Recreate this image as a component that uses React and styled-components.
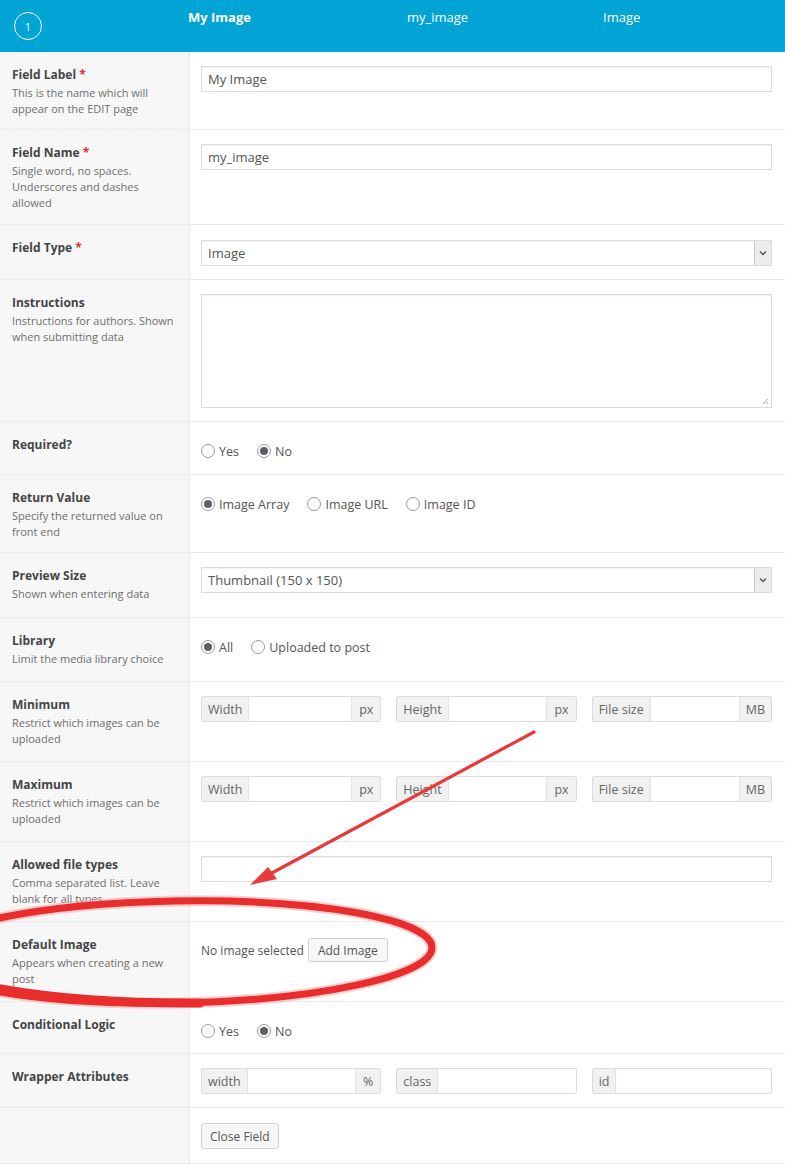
import React from "react";
import styled, { createGlobalStyle } from "styled-components";

const GlobalStyle = createGlobalStyle`
  body {
    margin: 0;
    background: #fff;
    font-family: "Open Sans", "Noto Sans", sans-serif;
  }
`;

const Page = styled.div`
  position: relative;
  width: 785px;
  overflow: hidden;
`;

const Header = styled.div`
  display: grid;
  grid-template-columns: 174px 219px 196px 1fr;
  height: 52px;
  padding-left: 14px;
  box-sizing: border-box;
  background: #02a3d5;
  color: #fff;
  font-size: 13px;
`;

const Circle = styled.div`
  width: 28px;
  height: 28px;
  margin-top: 12px;
  border: 1px solid #fff;
  border-radius: 50%;
  box-sizing: border-box;
  display: flex;
  align-items: center;
  justify-content: center;
  font-size: 11px;
`;

const HeadText = styled.div`
  padding-top: 8px;
  line-height: 18px;
  font-weight: ${(p) => (p.$bold ? 700 : 400)};
`;

const Row = styled.div`
  display: grid;
  grid-template-columns: 190px 1fr;
  height: ${(p) => p.$h}px;
  box-sizing: border-box;
  border-bottom: 1px solid #eaeaea;
`;

const LabelCell = styled.div`
  background-color: #f8f8f8;
  background-image: radial-gradient(#efefef 0.6px, transparent 0.8px);
  background-size: 3px 3px;
  border-right: 1px solid #e8e8e8;
  padding: 14px 10px 0 12px;
`;

const Title = styled.div`
  font-size: 12px;
  font-weight: 700;
  line-height: 18px;
  color: #454545;
`;

const Req = styled.span`
  color: #e0302f;
`;

const Desc = styled.div`
  font-size: 11px;
  line-height: 16px;
  color: #6e6e6e;
  margin-top: 1px;
`;

const FieldCell = styled.div`
  padding: 14px 13px 0 11px;
`;

const TextInput = styled.div`
  height: 26px;
  border: 1px solid #dcdcdc;
  box-shadow: inset 0 1px 2px rgba(0, 0, 0, 0.06);
  box-sizing: border-box;
  padding: 0 6px;
  display: flex;
  align-items: center;
  font-size: 13px;
  color: #555;
  background: #fff;
`;

const SelectBox = styled(TextInput)`
  justify-content: space-between;
  padding-right: 0;
  margin-top: ${(p) => p.$mt || 0}px;
`;

const ArrowBox = styled.div`
  width: 16px;
  height: 24px;
  background: #ececec;
  border-left: 1px solid #c8c8c8;
  display: flex;
  align-items: center;
  justify-content: center;
`;

const TextArea = styled.div`
  position: relative;
  height: 114px;
  border: 1px solid #dcdcdc;
  box-shadow: inset 0 1px 2px rgba(0, 0, 0, 0.06);
  box-sizing: border-box;
`;

const Grip = styled.svg`
  position: absolute;
  right: 2px;
  bottom: 2px;
`;

const Radios = styled.div`
  display: flex;
  align-items: center;
  height: 28px;
  margin-top: 1px;
`;

const RadioItem = styled.label`
  display: flex;
  align-items: center;
  gap: 4px;
  margin-right: 18px;
  font-size: 12.5px;
  color: #555;
`;

const RadioDot = styled.span`
  width: 14px;
  height: 14px;
  border: 1px solid #9a9a9a;
  border-radius: 50%;
  box-sizing: border-box;
  background: #fff;
  display: flex;
  align-items: center;
  justify-content: center;
  &::after {
    content: "";
    width: 8px;
    height: 8px;
    border-radius: 50%;
    background: ${(p) => (p.$on ? "#5e5e64" : "transparent")};
  }
`;

const Groups = styled.div`
  display: grid;
  grid-template-columns: 1fr 1fr 1fr;
  gap: 15px;
`;

const Group = styled.div`
  display: flex;
  height: 26px;
  border: 1px solid #dcdcdc;
  border-radius: 2px;
  box-sizing: border-box;
  overflow: hidden;
`;

const Addon = styled.div`
  display: flex;
  align-items: center;
  padding: 0 ${(p) => p.$pad || 6}px;
  background: #f1f1f1;
  font-size: 12.5px;
  color: #666;
  white-space: nowrap;
`;

const GroupField = styled.div`
  flex: 1;
  background: #fff;
  border-left: 1px solid #e2e2e2;
  border-right: ${(p) => (p.$last ? "none" : "1px solid #e2e2e2")};
`;

const ImageLine = styled.div`
  display: flex;
  align-items: center;
  gap: 4px;
  height: 28px;
  font-size: 12px;
  color: #555;
`;

const Button = styled.div`
  display: inline-flex;
  align-items: center;
  height: ${(p) => p.$h || 24}px;
  padding: 0 ${(p) => p.$pad || 9}px;
  border: 1px solid #cfcfcf;
  border-radius: 3px;
  background: #f7f7f7;
  box-sizing: border-box;
  font-size: 12px;
  color: #555;
  margin-top: ${(p) => p.$mt || 0}px;
`;

const Overlay = styled.svg`
  position: absolute;
  top: 0;
  left: 0;
  pointer-events: none;
`;

const Radio = ({ on, children }) => (
  <RadioItem>
    <RadioDot $on={on} />
    {children}
  </RadioItem>
);

const Chevron = () => (
  <svg width="8" height="6" viewBox="0 0 8 6">
    <path d="M1 1.5 L4 4.5 L7 1.5" fill="none" stroke="#555" strokeWidth="1.4" />
  </svg>
);

const SizeGroups = () => (
  <Groups>
    <Group>
      <Addon>Width</Addon>
      <GroupField />
      <Addon $pad={7}>px</Addon>
    </Group>
    <Group>
      <Addon>Height</Addon>
      <GroupField />
      <Addon $pad={7}>px</Addon>
    </Group>
    <Group>
      <Addon>File size</Addon>
      <GroupField />
      <Addon>MB</Addon>
    </Group>
  </Groups>
);

const Annotations = () => (
  <Overlay width="785" height="1164" viewBox="0 0 785 1164">
    <ellipse cx="176" cy="952" rx="256" ry="51" fill="none" stroke="#f39a9a" strokeWidth="11" opacity="0.45" transform="rotate(-1 176 952)" />
    <ellipse cx="176" cy="952" rx="256" ry="51" fill="none" stroke="#e92d2d" strokeWidth="7" transform="rotate(-1 176 952)" />
    <path d="M -60 975 Q 40 1004 200 1003" fill="none" stroke="#e92d2d" strokeWidth="9" strokeLinecap="round" />
    <line x1="534" y1="732" x2="270" y2="874" stroke="#e9393a" strokeWidth="3.2" strokeLinecap="round" />
    <polygon points="250,885 268,867 277,879" fill="#e9393a" />
  </Overlay>
);

const App = () => {
  return (
    <Page>
      <GlobalStyle />
      <Header>
        <Circle>1</Circle>
        <HeadText $bold>My Image</HeadText>
        <HeadText>my_image</HeadText>
        <HeadText>Image</HeadText>
      </Header>

      <Row $h={78}>
        <LabelCell>
          <Title>
            Field Label <Req>*</Req>
          </Title>
          <Desc>This is the name which will appear on the EDIT page</Desc>
        </LabelCell>
        <FieldCell>
          <TextInput>My Image</TextInput>
        </FieldCell>
      </Row>

      <Row $h={95}>
        <LabelCell>
          <Title>
            Field Name <Req>*</Req>
          </Title>
          <Desc>Single word, no spaces. Underscores and dashes allowed</Desc>
        </LabelCell>
        <FieldCell>
          <TextInput>my_image</TextInput>
        </FieldCell>
      </Row>

      <Row $h={55}>
        <LabelCell>
          <Title>
            Field Type <Req>*</Req>
          </Title>
        </LabelCell>
        <FieldCell>
          <SelectBox $mt={1}>
            Image
            <ArrowBox>
              <Chevron />
            </ArrowBox>
          </SelectBox>
        </FieldCell>
      </Row>

      <Row $h={142}>
        <LabelCell>
          <Title>Instructions</Title>
          <Desc>Instructions for authors. Shown when submitting data</Desc>
        </LabelCell>
        <FieldCell>
          <TextArea>
            <Grip width="8" height="8" viewBox="0 0 8 8">
              <path d="M7 2 L2 7 M7 5 L5 7" stroke="#aaa" strokeWidth="1" />
            </Grip>
          </TextArea>
        </FieldCell>
      </Row>

      <Row $h={53}>
        <LabelCell>
          <Title>Required?</Title>
        </LabelCell>
        <FieldCell>
          <Radios>
            <Radio>Yes</Radio>
            <Radio on>No</Radio>
          </Radios>
        </FieldCell>
      </Row>

      <Row $h={78}>
        <LabelCell>
          <Title>Return Value</Title>
          <Desc>Specify the returned value on front end</Desc>
        </LabelCell>
        <FieldCell>
          <Radios>
            <Radio on>Image Array</Radio>
            <Radio>Image URL</Radio>
            <Radio>Image ID</Radio>
          </Radios>
        </FieldCell>
      </Row>

      <Row $h={65}>
        <LabelCell>
          <Title>Preview Size</Title>
          <Desc>Shown when entering data</Desc>
        </LabelCell>
        <FieldCell>
          <SelectBox>
            Thumbnail (150 x 150)
            <ArrowBox>
              <Chevron />
            </ArrowBox>
          </SelectBox>
        </FieldCell>
      </Row>

      <Row $h={64}>
        <LabelCell>
          <Title>Library</Title>
          <Desc>Limit the media library choice</Desc>
        </LabelCell>
        <FieldCell>
          <Radios>
            <Radio on>All</Radio>
            <Radio>Uploaded to post</Radio>
          </Radios>
        </FieldCell>
      </Row>

      <Row $h={80}>
        <LabelCell>
          <Title>Minimum</Title>
          <Desc>Restrict which images can be uploaded</Desc>
        </LabelCell>
        <FieldCell>
          <SizeGroups />
        </FieldCell>
      </Row>

      <Row $h={80}>
        <LabelCell>
          <Title>Maximum</Title>
          <Desc>Restrict which images can be uploaded</Desc>
        </LabelCell>
        <FieldCell>
          <SizeGroups />
        </FieldCell>
      </Row>

      <Row $h={80}>
        <LabelCell>
          <Title>Allowed file types</Title>
          <Desc>Comma separated list. Leave blank for all types</Desc>
        </LabelCell>
        <FieldCell>
          <TextInput />
        </FieldCell>
      </Row>

      <Row $h={80}>
        <LabelCell>
          <Title>Default Image</Title>
          <Desc>Appears when creating a new post</Desc>
        </LabelCell>
        <FieldCell>
          <ImageLine>
            No image selected
            <Button>Add Image</Button>
          </ImageLine>
        </FieldCell>
      </Row>

      <Row $h={52}>
        <LabelCell>
          <Title>Conditional Logic</Title>
        </LabelCell>
        <FieldCell>
          <Radios>
            <Radio>Yes</Radio>
            <Radio on>No</Radio>
          </Radios>
        </FieldCell>
      </Row>

      <Row $h={54}>
        <LabelCell>
          <Title>Wrapper Attributes</Title>
        </LabelCell>
        <FieldCell>
          <Groups>
            <Group>
              <Addon>width</Addon>
              <GroupField />
              <Addon $pad={7}>%</Addon>
            </Group>
            <Group>
              <Addon>class</Addon>
              <GroupField $last />
            </Group>
            <Group>
              <Addon>id</Addon>
              <GroupField $last />
            </Group>
          </Groups>
        </FieldCell>
      </Row>

      <Row $h={56}>
        <LabelCell />
        <FieldCell>
          <Button $h={26} $mt={1} $pad={8}>Close Field</Button>
        </FieldCell>
      </Row>

      <Annotations />
    </Page>
  );
};

export default App;
